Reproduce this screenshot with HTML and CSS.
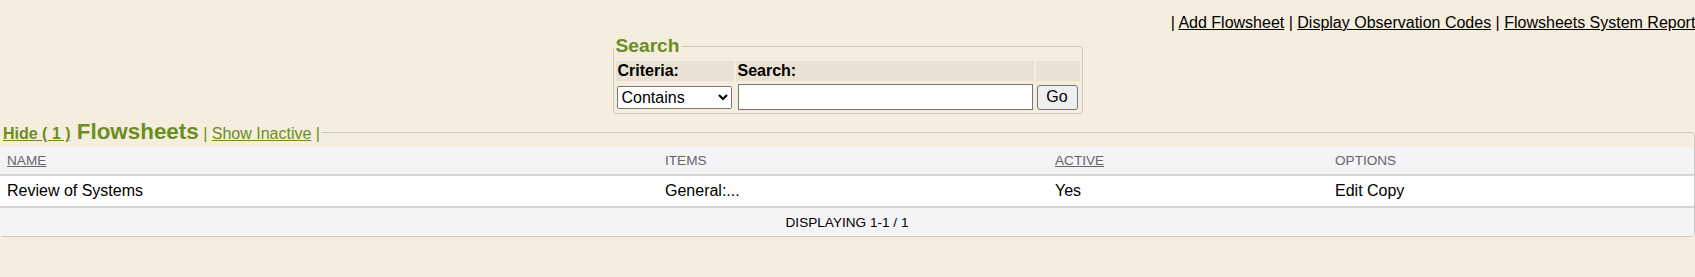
FILE: index.html
```html
<!DOCTYPE html>
<html lang="en">
<head>
    <meta charset="UTF-8">
    <title>Flowsheets</title>
    <link rel="stylesheet" href="styles.css">
</head>
<body>
    <div class="toplinks">| <a href="#">Add Flowsheet</a> | <a href="#">Display Observation Codes</a> | <a href="#">Flowsheets System Reports</a> |</div>

    <fieldset class="search">
        <legend>Search</legend>
        <table class="search-table">
            <tr class="head">
                <td class="c-crit">Criteria:</td>
                <td class="c-text">Search:</td>
                <td class="c-go"></td>
            </tr>
            <tr>
                <td>
                    <select>
                        <option>Contains</option>
                        <option>Equals</option>
                        <option>Starts with</option>
                    </select>
                </td>
                <td><input type="text"></td>
                <td><button>Go</button></td>
            </tr>
        </table>
    </fieldset>

    <fieldset class="list">
        <legend><a href="#" class="hide">Hide ( 1 )</a><span class="title"> Flowsheets</span> | <a href="#">Show Inactive</a> |</legend>
        <table class="list-table">
            <colgroup>
                <col class="w-name">
                <col class="w-items">
                <col class="w-active">
                <col>
            </colgroup>
            <thead>
                <tr>
                    <th><a href="#">NAME</a></th>
                    <th>ITEMS</th>
                    <th><a href="#">ACTIVE</a></th>
                    <th>OPTIONS</th>
                </tr>
            </thead>
            <tbody>
                <tr>
                    <td>Review of Systems</td>
                    <td>General:...</td>
                    <td>Yes</td>
                    <td>Edit Copy</td>
                </tr>
            </tbody>
            <tfoot>
                <tr>
                    <td colspan="4">DISPLAYING 1-1 / 1</td>
                </tr>
            </tfoot>
        </table>
    </fieldset>
</body>
</html>
```

FILE: styles.css
```css
body {
    font-family: "Liberation Sans", Arial, sans-serif;
    font-size: 16px;
    margin: 0;
    padding: 0;
    background-color: #f5eddd;
    color: #000;
    overflow: hidden;
}

a {
    color: inherit;
}

.toplinks {
    margin: 14px -17px 0 0;
    line-height: 18px;
    text-align: right;
    white-space: nowrap;
}

/* search box */
.search {
    width: max-content;
    margin: 3px auto 0;
    padding: 2px 0 0;
    border: 1px solid #cdcac3;
    border-radius: 4px;
}

.search legend {
    margin-left: 0;
    padding: 0 2px;
    font-size: 19.2px;
    line-height: 22px;
    font-weight: bold;
    color: #6b8e23;
}

.search-table {
    border-spacing: 2px;
}

.search-table td {
    padding: 1px 1px;
}

.search-table .head td {
    height: 20px;
    background-color: #e9e2d2;
    font-weight: bold;
    padding: 0 2px;
}

.c-crit { width: 114px; }
.c-text { width: 294px; }
.c-go { width: 40px; }

.search-table select {
    width: 115px;
    height: 23px;
    font-family: inherit;
    font-size: 16px;
    margin: 1px 0 0 0;
}

.search-table input {
    width: 295px;
    height: 26px;
    box-sizing: border-box;
    margin: 0 0 0 1px;
    border: 1px solid #767676;
    font-family: inherit;
    font-size: 16px;
}

.search-table button {
    width: 41px;
    height: 25px;
    margin: 0;
    font-family: inherit;
    font-size: 16px;
    background-color: #efefef;
    border: 1px solid #767676;
    border-radius: 3px;
}

/* flowsheet list */
.list {
    margin: 4px 0 0;
    padding: 0;
    border: 1px solid #cdcac3;
    border-left: none;
    border-radius: 4px;
}

.list legend {
    margin-left: 1px;
    padding: 0 2px;
    line-height: 27px;
    color: #6b8e23;
}

.list legend .hide {
    font-weight: bold;
}

.list legend .title {
    font-size: 22.4px;
    font-weight: bold;
}

.list-table {
    width: 100%;
    border-collapse: collapse;
}

.w-name { width: 658px; }
.w-items { width: 390px; }
.w-active { width: 280px; }

.list-table th {
    height: 27px;
    padding: 0 7px;
    background-color: #f4f4f6;
    border-bottom: 2px solid #d6d6d6;
    text-align: left;
    font-weight: normal;
    font-size: 13.6px;
    color: #666;
}

.list-table tbody td {
    height: 30px;
    padding: 0 7px;
    background-color: #fff;
    border-bottom: 2px solid #d6d6d6;
}

.list-table tfoot td {
    height: 28px;
    padding: 0;
    background-color: #f4f4f6;
    text-align: center;
    font-size: 13.6px;
}
```
